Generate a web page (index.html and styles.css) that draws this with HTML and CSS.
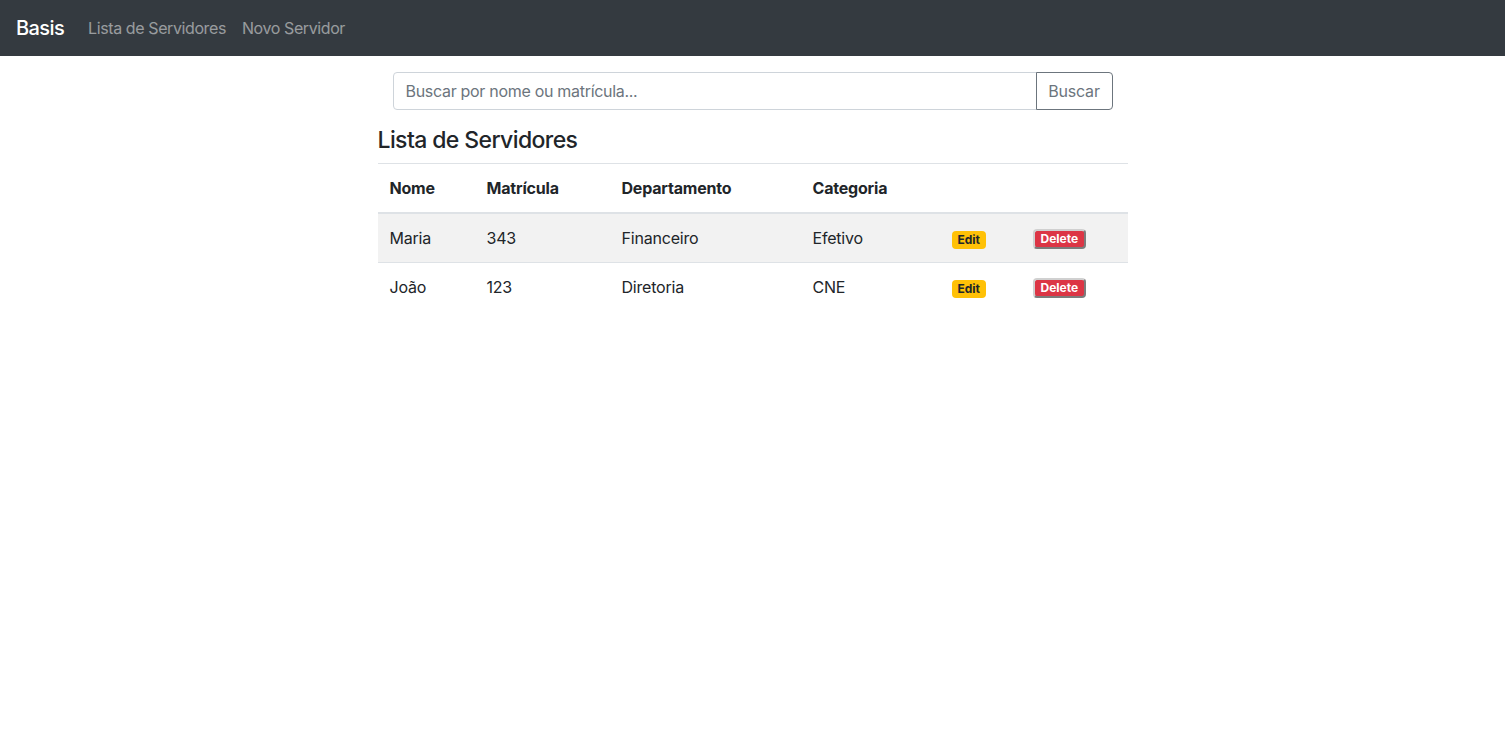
FILE: index.html
```html
<!DOCTYPE html>
<html lang="pt-BR">
<head>
<meta charset="utf-8">
<title>Basis</title>
<link rel="stylesheet" href="styles.css">
</head>
<body>
<nav class="navbar">
  <a class="brand" href="#">Basis</a>
  <div class="nav-links">
    <a class="nav-link" href="#">Lista de Servidores</a>
    <a class="nav-link" href="#">Novo Servidor</a>
  </div>
</nav>
<main class="container">
  <form class="search">
    <input class="search-input" type="text" placeholder="Buscar por nome ou matrícula...">
    <button class="search-btn" type="button">Buscar</button>
  </form>
  <h4 class="title">Lista de Servidores</h4>
  <table class="table">
    <colgroup>
      <col class="c1"><col class="c2"><col class="c3"><col class="c4"><col class="c5"><col class="c6">
    </colgroup>
    <thead>
      <tr><th>Nome</th><th>Matrícula</th><th>Departamento</th><th>Categoria</th><th></th><th></th></tr>
    </thead>
    <tbody>
      <tr class="striped">
        <td>Maria</td><td>343</td><td>Financeiro</td><td>Efetivo</td>
        <td><a class="badge badge-warning" href="#">Edit</a></td>
        <td><button class="badge badge-danger" type="button">Delete</button></td>
      </tr>
      <tr>
        <td>João</td><td>123</td><td>Diretoria</td><td>CNE</td>
        <td><a class="badge badge-warning" href="#">Edit</a></td>
        <td><button class="badge badge-danger" type="button">Delete</button></td>
      </tr>
    </tbody>
  </table>
</main>
</body>
</html>
```
FILE: styles.css
```css
* { box-sizing: border-box; }
body {
  margin: 0;
  font-family: Inter, "Noto Sans", "Liberation Sans", sans-serif;
  font-size: 16px;
  line-height: 1.5;
  color: #212529;
  background: #fff;
}
.navbar {
  height: 56px;
  background: #343a40;
  display: flex;
  align-items: center;
  padding: 0 16px;
}
.brand {
  color: #fff;
  font-size: 20px;
  font-weight: 500;
  text-decoration: none;
  margin-right: 16px;
  line-height: 30px;
  letter-spacing: -0.6px;
}
.nav-links { display: flex; }
.nav-link {
  color: rgba(255,255,255,.5);
  text-decoration: none;
  padding: 0 8px;
  letter-spacing: -0.4px;
}
.container {
  width: 750px;
  margin: 0 auto;
}
.search {
  display: flex;
  margin: 16px 15px 0;
}
.search-input {
  flex: 1;
  height: 38px;
  border: 1px solid #ced4da;
  border-radius: 4px 0 0 4px;
  padding: 6px 12px;
  font: inherit;
  color: #495057;
  outline: none;
  letter-spacing: -0.3px;
}
.search-input::placeholder { color: #6c757d; }
.search-btn {
  width: 77px;
  height: 38px;
  border: 1px solid #6c757d;
  border-radius: 0 4px 4px 0;
  background: #fff;
  color: #6c757d;
  font: inherit;
  margin-left: -1px;
  padding: 0;
  letter-spacing: -0.2px;
}
.title {
  font-size: 23px;
  font-weight: 500;
  line-height: 1.2;
  margin: 17px 0 8px;
  letter-spacing: -0.6px;
}
.table {
  width: 750px;
  border-collapse: collapse;
  table-layout: fixed;
}
.c1 { width: 97px; }
.c2 { width: 135px; }
.c3 { width: 191px; }
.c4 { width: 139px; }
.c5 { width: 81px; }
.c6 { width: 107px; }
.table th, .table td {
  padding: 12px;
  text-align: left;
  vertical-align: top;
  border-top: 1px solid #dee2e6;
  letter-spacing: -0.2px;
  white-space: nowrap;
}
.table th { font-weight: 700; }
.table thead th { border-bottom: 2px solid #dee2e6; }
.striped td { background: #f2f2f2; }
.badge {
  display: inline-block;
  font-family: inherit;
  font-size: 12px;
  font-weight: 700;
  height: 18px;
  line-height: 18px;
  padding: 0 6px;
  border-radius: 4px;
  text-decoration: none;
  vertical-align: middle;
  letter-spacing: 0;
  margin-top: 1px;
}
.badge-warning {
  background: #ffc107;
  color: #212529;
}
.badge-danger {
  background: #dc3545;
  color: #fff;
  border: 2px outset #d0d0d0;
  height: 20px;
  line-height: 16px;
  padding: 0 6px;
  margin-top: 0;
}
```
